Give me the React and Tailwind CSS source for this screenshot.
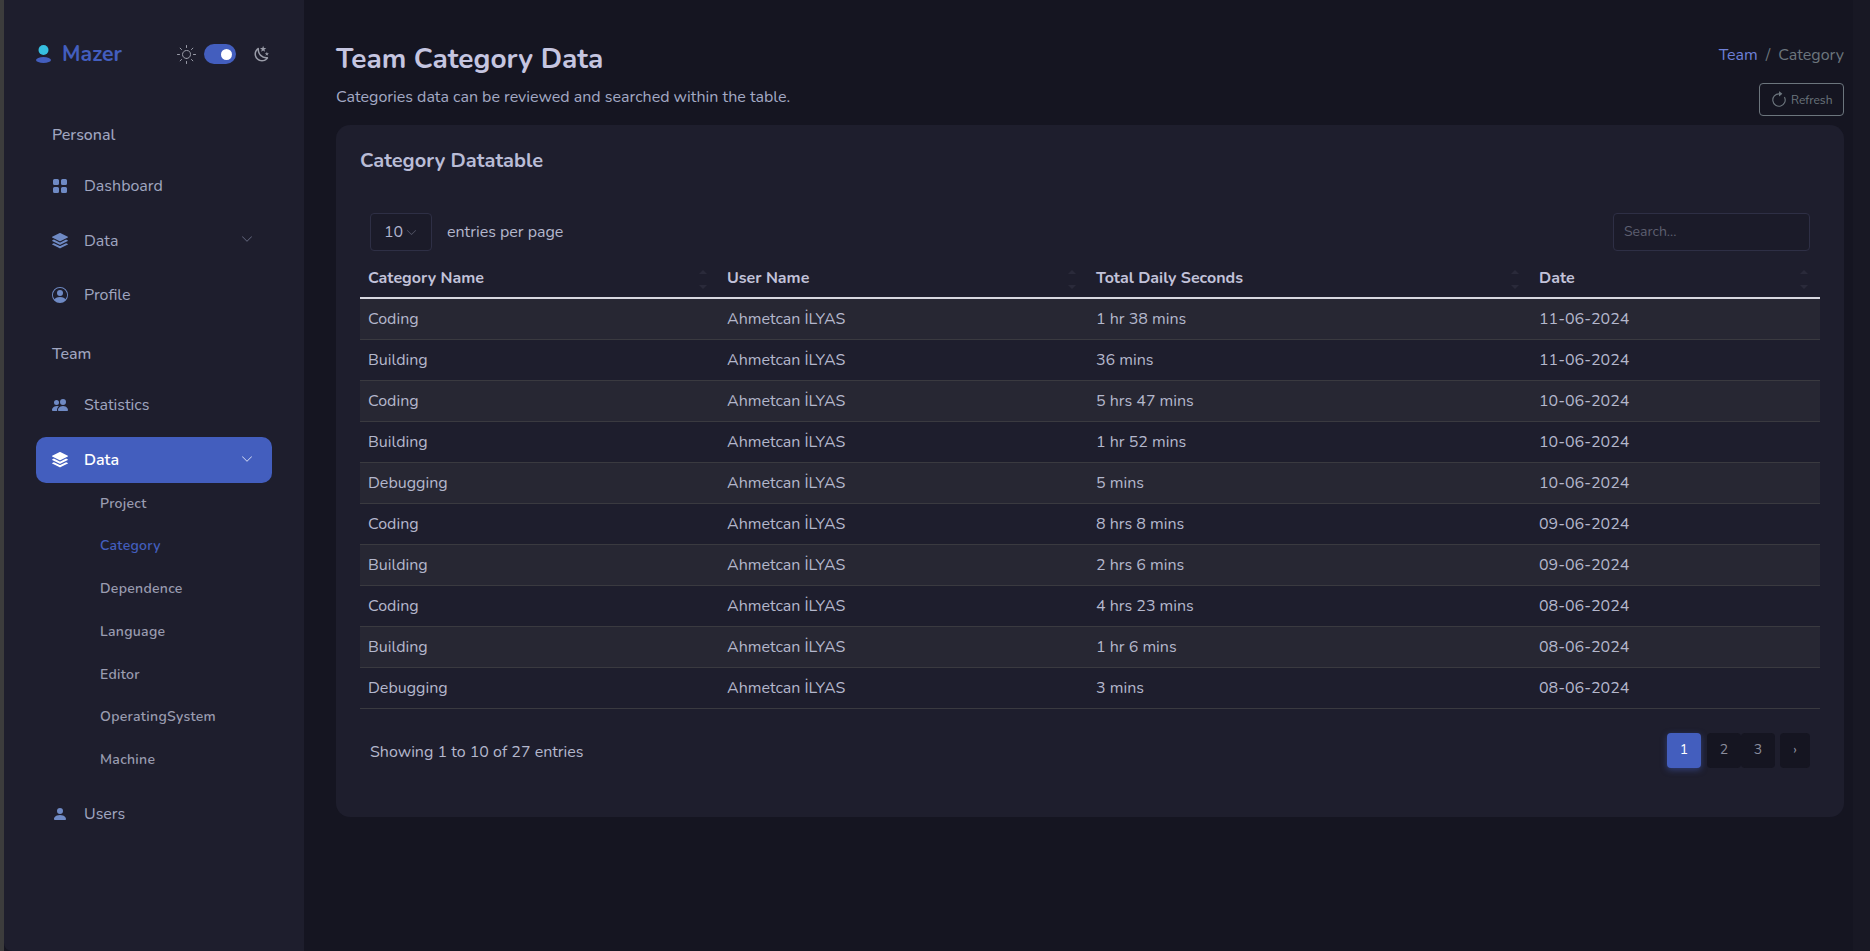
import React from "react";
import { BsGridFill, BsStack, BsPersonCircle, BsPeopleFill, BsPersonFill, BsChevronDown, BsArrowClockwise } from "react-icons/bs";

const font = "font-['Nunito','Lato','Noto_Sans',sans-serif]";

const rows = [
  ["Coding", "1 hr 38 mins", "11-06-2024"],
  ["Building", "36 mins", "11-06-2024"],
  ["Coding", "5 hrs 47 mins", "10-06-2024"],
  ["Building", "1 hr 52 mins", "10-06-2024"],
  ["Debugging", "5 mins", "10-06-2024"],
  ["Coding", "8 hrs 8 mins", "09-06-2024"],
  ["Building", "2 hrs 6 mins", "09-06-2024"],
  ["Coding", "4 hrs 23 mins", "08-06-2024"],
  ["Building", "1 hr 6 mins", "08-06-2024"],
  ["Debugging", "3 mins", "08-06-2024"],
];

function NavItem({ icon: Icon, label, chevron, active }) {
  return (
    <div className={`flex items-center h-[46px] mx-8 pl-4 pr-[19px] rounded-[10px] ${active ? "bg-[#435ebe] text-white font-semibold" : "text-[#a0a6c0]"}`}>
      <Icon className={`w-4 h-4 mr-4 shrink-0 ${active ? "text-white" : "text-[#6f8ac4]"}`} />
      <span className="flex-1 text-base">{label}</span>
      {chevron && <BsChevronDown className={`w-3 h-3 -mt-[3px] ${active ? "text-[#d8def5]" : "text-[#666a80]"}`} />}
    </div>
  );
}

function SortHead({ label, width }) {
  return (
    <th className={`relative text-left font-bold text-[#c2c2d9] text-base pl-2 pr-2 pt-[2px] h-[41px] ${width}`}>
      {label}
      <span className="absolute right-[12px] top-[13px] flex flex-col gap-[11px]">
        <span className="block w-0 h-0 border-x-[4px] border-x-transparent border-b-[4px] border-b-[#2a2a3a]" />
        <span className="block w-0 h-0 border-x-[4px] border-x-transparent border-t-[4px] border-t-[#2a2a3a]" />
      </span>
    </th>
  );
}

function SunIcon() {
  return (
    <svg width="21" height="21" viewBox="0 0 21 21" fill="none" stroke="#9a9ca8" strokeLinecap="round" strokeLinejoin="round" className="ml-[54px] shrink-0">
      <path d="M10.5 14.5c2.219 0 4-1.763 4-3.982a4.003 4.003 0 0 0-4-4.018c-2.219 0-4 1.781-4 4c0 2.219 1.781 4 4 4zM4.136 4.136L5.55 5.55m9.9 9.9l1.414 1.414M1.5 10.5h2m14 0h2M4.135 16.863L5.55 15.45m9.9-9.9l1.414-1.414M10.5 19.5v-2m0-14v-2" />
    </svg>
  );
}

function MoonIcon() {
  return (
    <svg width="18" height="18" viewBox="0 0 24 24" fill="#9a9ca8" className="ml-[17px] shrink-0">
      <path d="m17.75 4.09l-2.53 1.94l.91 3.06l-2.63-1.81l-2.63 1.81l.91-3.06l-2.53-1.94L12.44 4l1.06-3l1.06 3l3.19.09m3.5 6.91l-1.64 1.25l.59 1.98l-1.7-1.17l-1.7 1.17l.59-1.98L15.75 11l2.06-.05L18.5 9l.69 1.95l2.06.05m-2.28 4.95c.83-.08 1.72 1.1 1.19 1.85c-.32.45-.66.87-1.08 1.27C15.17 23 8.84 23 4.94 19.07c-3.91-3.9-3.91-10.24 0-14.14c.4-.4.82-.76 1.27-1.08c.75-.53 1.93.36 1.85 1.19c-.27 2.86.69 5.83 2.89 8.02a9.96 9.96 0 0 0 8.02 2.89m-1.64 2.02a12.08 12.08 0 0 1-7.8-3.47c-2.17-2.19-3.33-5-3.49-7.82c-2.81 3.14-2.7 7.96.31 10.98c3.02 3.01 7.84 3.12 10.98.31Z" />
    </svg>
  );
}

export default function App() {
  const subs = ["Project", "Category", "Dependence", "Language", "Editor", "OperatingSystem", "Machine"];
  return (
    <div className={`flex h-[951px] overflow-hidden bg-[#151521] ${font}`}>
      <div className="w-1 shrink-0 bg-[#3c3c3c]" />
      <aside className="w-[300px] shrink-0 bg-[#1e1e2d] rounded-bl-lg flex flex-col">
        <div className="flex items-center h-[108px] pl-[32px]">
          <svg width="16" height="20" viewBox="0 0 16 20" className="mr-[10px] shrink-0">
            <circle cx="7.5" cy="6" r="5" fill="#36bfe0" />
            <ellipse cx="7.5" cy="16" rx="7.5" ry="3" fill="#435ebe" />
          </svg>
          <span className="pt-[2px] text-[21.3px] font-bold text-[#435ebe]">Mazer</span>
          <SunIcon />
          <span className="ml-[7px] w-8 h-5 rounded-full bg-[#435ebe] flex items-center justify-end pr-[4px]">
            <span className="w-[11px] h-[11px] rounded-full bg-white" />
          </span>
          <MoonIcon />
        </div>
        <div className="h-[50px] flex items-end pb-[11px] pl-[48px] text-base font-medium text-[#a0a6c0]">Personal</div>
        <div className="mt-[5px] flex flex-col gap-[8.5px]">
          <NavItem icon={BsGridFill} label="Dashboard" />
          <NavItem icon={BsStack} label="Data" chevron />
          <NavItem icon={BsPersonCircle} label="Profile" />
        </div>
        <div className="h-[41px] mt-[15px] flex items-center pl-[48px] text-base font-medium text-[#a0a6c0]">Team</div>
        <div className="mt-[8px] flex flex-col gap-[9px]">
          <NavItem icon={BsPeopleFill} label="Statistics" />
          <NavItem icon={BsStack} label="Data" chevron active />
        </div>
        <div className="flex flex-col mt-[-1.4px] pl-[96px]">
          {subs.map((s) => (
            <div key={s} className={`h-[42.8px] flex items-center text-[14px] tracking-[0.3px] font-semibold ${s === "Category" ? "text-[#435ebe] font-bold" : "text-[#9a9cb0]"}`}>{s}</div>
          ))}
        </div>
        <div className="mt-[9.5px]"><NavItem icon={BsPersonFill} label="Users" /></div>
      </aside>
      <main className="flex-1 min-w-0 pl-[32px] pr-[9px]">
        <div className="flex justify-between h-[125px]">
          <div className="pt-[39px]">
            <h1 className="text-[28px] leading-[40px] font-bold text-[#c5c5e0]">Team Category Data</h1>
            <p className="mt-[6px] text-base leading-[24px] text-[#a3a9c4]">Categories data can be reviewed and searched within the table.</p>
          </div>
          <div className="pt-[43px] flex flex-col items-end">
            <div className="text-base leading-[24px]">
              <span className="text-[#6e80d8]">Team</span>
              <span className="text-[#6c757d] mx-2">/</span>
              <span className="text-[#6c757d]">Category</span>
            </div>
            <button className="mt-[16px] flex items-center h-[33px] w-[85px] pl-[10px] border border-[#6c757d] rounded text-[#6c757d] text-xs">
              <BsArrowClockwise className="w-[18px] h-[18px] mr-[3px] shrink-0" />
              Refresh
            </button>
          </div>
        </div>
        <section className="bg-[#1e1e2d] rounded-[14px] h-[692px] px-[24px]">
          <h2 className="pt-[22px] text-[20px] leading-[28px] font-bold text-[#b9bcd6]">Category Datatable</h2>
          <div className="flex items-center justify-between mt-[38px] pl-[10px] pr-[10px]">
            <div className="flex items-center">
              <div className="w-[62px] h-[38px] flex items-center pl-[13px] bg-[#1b1b29] border border-[#2e2f45] rounded text-[#b0b3cc] text-base">
                10
                <BsChevronDown className="w-[11px] h-[11px] ml-[3px] text-[#555768]" />
              </div>
              <span className="ml-[15px] text-base text-[#b4b7cc]">entries per page</span>
            </div>
            <input readOnly placeholder="Search..." className="w-[197px] h-[38px] px-[10px] pb-[2px] bg-[#1b1b29] border border-[#2e2f45] rounded text-sm placeholder:text-[#5d5f70]" />
          </div>
          <table className="w-[1460px] mt-[6px] border-collapse table-fixed">
            <thead>
              <tr className="border-b-2 border-b-[#d8d8e0]">
                <SortHead label="Category Name" width="w-[359px]" />
                <SortHead label="User Name" width="w-[369px]" />
                <SortHead label="Total Daily Seconds" width="w-[443px]" />
                <SortHead label="Date" width="w-[289px]" />
              </tr>
            </thead>
            <tbody>
              {rows.map((r, i) => (
                <tr key={i} className={`h-[41px] border-b border-b-[#3a3a40] text-base text-[#b4b7cc] ${i % 2 === 0 ? "bg-[#272733]" : ""}`}>
                  <td className="pl-2">{r[0]}</td>
                  <td className="pl-2">Ahmetcan İLYAS</td>
                  <td className="pl-2">{r[1]}</td>
                  <td className="pl-2">{r[2]}</td>
                </tr>
              ))}
            </tbody>
          </table>
          <div className="flex items-center justify-between mt-[24px] pl-[10px] pr-[10px]">
            <span className="pt-[4px] text-base text-[#b4b7cc]">Showing 1 to 10 of 27 entries</span>
            <div className="flex items-center text-sm">
              <span className="w-[34px] h-[35px] flex items-center justify-center rounded bg-[#435ebe] text-white shadow-[0_2px_6px_rgba(67,94,190,0.5)]">1</span>
              <span className="ml-[6px] w-[34px] h-[35px] flex items-center justify-center rounded bg-[#151521] text-[#8a8c9c]">2</span>
              <span className="w-[34px] h-[35px] flex items-center justify-center rounded bg-[#151521] text-[#8a8c9c]">3</span>
              <span className="ml-[5px] w-[30px] h-[35px] flex items-center justify-center rounded bg-[#151521] text-[#8a8c9c]">›</span>
            </div>
          </div>
        </section>
      </main>
      <div className="w-[17px] shrink-0 bg-[#181824]" />
    </div>
  );
}
